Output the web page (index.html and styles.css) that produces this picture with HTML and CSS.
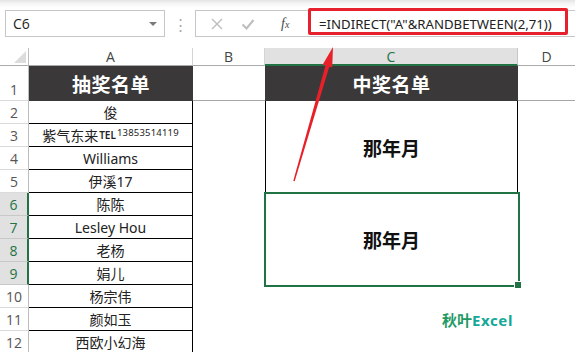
FILE: index.html
```html
<!DOCTYPE html>
<html>
<head>
<meta charset="utf-8">
<link rel="stylesheet" href="styles.css">
</head>
<body>
<div class="page">
  <div class="toolbar">
    <div class="namebox"><span class="ref">C6</span><span class="caret"></span></div>
    <div class="sep">⋮</div>
    <div class="fbar">
      <svg class="ico" width="14" height="14" viewBox="0 0 14 14"><path d="M2 2 L12 12 M12 2 L2 12" stroke="#bdbdbd" stroke-width="1.4" fill="none"/></svg>
      <svg class="ico ok" width="14" height="14" viewBox="0 0 14 14"><path d="M1.5 7.5 L5.5 11.5 L12.5 3" stroke="#bdbdbd" stroke-width="2" fill="none"/></svg>
      <span class="fx">f<small>x</small></span>
      <div class="formula">=INDIRECT("A"&amp;RANDBETWEEN(2,71))</div>
    </div>
    <div class="callout"></div>
  </div>

  <div class="sheet">
    <div class="rh corner"><span class="tri"></span></div>
    <div class="ch">A</div>
    <div class="ch">B</div>
    <div class="ch sel">C</div>
    <div class="ch last">D</div>

    <div class="rh r1">1</div>
    <div class="ca dark">抽奖名单</div>
    <div class="cb head"></div>
    <div class="cc dark">中奖名单</div>
    <div class="cd head"></div>

    <div class="rh">2</div>
    <div class="ca cell">俊</div>
    <div class="cb blank"></div>
    <div class="cc merge1"><span class="big">那年月</span></div>
    <div class="cd blank"></div>

    <div class="rh">3</div>
    <div class="ca cell"><span>紫气东来</span><span class="tel">TEL</span><span class="num">13853514119</span></div>

    <div class="rh">4</div>
    <div class="ca cell">Williams</div>

    <div class="rh">5</div>
    <div class="ca cell">伊溪17</div>

    <div class="rh sel">6</div>
    <div class="ca cell">陈陈</div>
    <div class="cc merge2"><span class="big">那年月</span></div>

    <div class="rh sel">7</div>
    <div class="ca cell">Lesley Hou</div>

    <div class="rh sel">8</div>
    <div class="ca cell">老杨</div>

    <div class="rh sel">9</div>
    <div class="ca cell">娟儿</div>

    <div class="rh">10</div>
    <div class="ca cell">杨宗伟</div>
    <div class="cc plain"></div>

    <div class="rh">11</div>
    <div class="ca cell">颜如玉</div>
    <div class="cc plain mark"><span class="qy">秋叶</span><span class="ex">Excel</span></div>

    <div class="rh">12</div>
    <div class="ca cell">西欧小幻海</div>
    <div class="cc plain"></div>
  </div>

  <svg class="arrow" width="575" height="352" viewBox="0 0 575 352">
    <polygon points="293.3,180.8 325.5,65.6 322.6,64.8 333,47 332.2,67.6 329.3,66.8 294.7,181.2" fill="#e8202a"/>
  </svg>
</div>
</body>
</html>
```

FILE: styles.css
```css
* { box-sizing: border-box; }
html, body { margin: 0; padding: 0; background: #fff; }
.page {
  position: relative;
  width: 575px;
  height: 352px;
  overflow: hidden;
  font-family: "Noto Sans", "Noto Sans CJK SC", sans-serif;
  color: #222;
}

/* ---------- toolbar ---------- */
.toolbar {
  position: relative;
  height: 48px;
  padding: 10px 0 0 5px;
  display: flex;
  align-items: flex-start;
  background: linear-gradient(#e4e4e4 0px, #f6f6f6 4px, #ffffff 8px);
}
.namebox {
  width: 160px;
  height: 27px;
  border: 1px solid #c6c6c6;
  background: #fff;
  display: flex;
  align-items: center;
  justify-content: space-between;
  padding: 0 6px 0 7px;
}
.ref { font-size: 14px; color: #222; font-family: "Open Sans", sans-serif; }
.caret {
  width: 0; height: 0;
  border-left: 4px solid transparent;
  border-right: 4px solid transparent;
  border-top: 4px solid #7a7a7a;
  margin-right: 1px;
}
.sep {
  width: 30px;
  height: 27px;
  display: flex;
  align-items: center;
  justify-content: center;
  color: #a8a8a8;
  font-size: 15px;
}
.fbar {
  flex: 1;
  height: 27px;
  border: 1px solid #c6c6c6;
  border-right: none;
  background: #fff;
  display: flex;
  align-items: center;
  padding-left: 14px;
}
.ico { display: block; }
.ok { margin-left: 17px; }
.fx {
  margin-left: 26px;
  font-family: "Liberation Serif", serif;
  font-style: italic;
  font-size: 14px;
  color: #4a4a4a;
  width: 14px;
}
.fx small { font-size: 10px; }
.formula {
  margin-left: 24px;
  font-family: "Noto Sans", sans-serif;
  font-size: 13.2px;
  color: #222;
  white-space: nowrap;
}
.callout {
  position: absolute;
  left: 308px;
  top: 8px;
  width: 260px;
  height: 27px;
  border: 3px solid #e6202c;
  border-radius: 2px;
}

/* ---------- sheet ---------- */
.sheet {
  display: grid;
  grid-template-columns: 29px 164px 72px 253px 57px;
  grid-template-rows: 18px 35px repeat(11, 23px);
}
.rh { grid-column: 1; }
.ca { grid-column: 2; }
.cb { grid-column: 3; }
.cc { grid-column: 4; }
.cd { grid-column: 5; }

.rh {
  border-right: 1px solid #bdbdbd;
  border-bottom: 1px solid #dadada;
  font-family: "Open Sans", sans-serif;
  font-size: 14px;
  color: #555;
  display: flex;
  align-items: flex-end;
  justify-content: center;
  line-height: 21px;
}
.rh.r1 { line-height: 20px; }
.rh.sel {
  background: #e1e1e1;
  color: #217346;
  border-right: 2px solid #217346;
  border-bottom-color: #c8c8c8;
}
.corner {
  position: relative;
  border-bottom: 1px solid #ababab;
}
.tri {
  position: absolute;
  right: 2px;
  bottom: 2px;
  width: 0; height: 0;
  border-left: 12px solid transparent;
  border-bottom: 12px solid #dcdcdc;
}
.ch {
  border-right: 1px solid #d4d4d4;
  border-bottom: 1px solid #ababab;
  font-family: "Open Sans", sans-serif;
  font-size: 14px;
  color: #444;
  display: flex;
  align-items: center;
  justify-content: center;
}
.ch.last { border-right: none; }
.ch.sel {
  background: #e1e1e1;
  color: #217346;
  border-bottom: 2px solid #217346;
  border-right-color: #c6c6c6;
}

.dark {
  background: #3a3838;
  color: #fff;
  font-family: "Noto Sans CJK SC", sans-serif;
  font-weight: 700;
  font-size: 19px;
  letter-spacing: 0.5px;
  display: flex;
  align-items: center;
  justify-content: center;
}
.head { border-bottom: 1px solid #a6a6a6; }

.cell {
  border-right: 1px solid #000;
  border-bottom: 1px solid #000;
  font-size: 14px;
  color: #222;
  display: flex;
  align-items: center;
  justify-content: center;
  white-space: nowrap;
}
.tel { font-size: 10px; font-weight: 600; margin-left: 1px; }
.num { font-size: 9.5px; position: relative; top: -3px; margin-left: 1px; letter-spacing: 0.2px; }

.blank { grid-row: span 11; }
.merge1 {
  grid-row: span 4;
  border-left: 1px solid #000;
  border-right: 1px solid #000;
  display: flex;
  align-items: center;
  justify-content: center;
}
.merge2 {
  grid-row: span 4;
  position: relative;
  display: flex;
  align-items: center;
  justify-content: center;
}
.merge2::after {
  content: "";
  position: absolute;
  left: -1px;
  top: -1px;
  right: -2px;
  bottom: -2px;
  border: 2px solid #217346;
}
.merge2::before {
  content: "";
  position: absolute;
  right: -3px;
  bottom: -3px;
  width: 6px;
  height: 6px;
  background: #217346;
  border-left: 1px solid #fff;
  border-top: 1px solid #fff;
  z-index: 1;
}
.big {
  font-family: "Noto Sans CJK SC", sans-serif;
  font-weight: 700;
  font-size: 19px;
  color: #111;
}
.mark {
  display: flex;
  align-items: center;
  justify-content: flex-end;
  padding-right: 5px;
  font-weight: 700;
  font-size: 15px;
}
.qy { color: #1f9a63; font-family: "Noto Sans CJK SC", sans-serif; }
.ex { color: #14a897; font-family: "Noto Sans", sans-serif; letter-spacing: 0.6px; }

.arrow {
  position: absolute;
  left: 0;
  top: 0;
  pointer-events: none;
}
```
